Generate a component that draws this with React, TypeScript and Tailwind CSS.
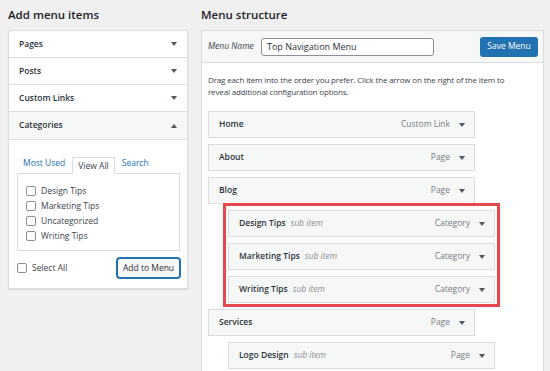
import React from "react";

const font = { fontFamily: '"Open Sans", "Noto Sans", sans-serif' };

function Caret({ up = false }: { up?: boolean }) {
  return (
    <svg width="6" height="4" viewBox="0 0 6 4" className="shrink-0">
      {up ? <path d="M0 4 L3 0 L6 4 Z" fill="#50575e" /> : <path d="M0 0 L6 0 L3 4 Z" fill="#50575e" />}
    </svg>
  );
}

function Checkbox() {
  return <span className="inline-block w-[10px] h-[10px] rounded-[2px] border border-[#8c8f94] bg-white shrink-0" />;
}

const sections = ["Pages", "Posts", "Custom Links"];
const cats = ["Design Tips", "Marketing Tips", "Uncategorized", "Writing Tips"];

type Item = { title: string; type: string; sub?: boolean };

function MenuItem({ title, type, sub }: Item) {
  return (
    <div
      className={`h-[27px] w-[267px] shrink-0 flex items-center border border-[#dcdcde] bg-[#f6f7f7] pl-[10px] pr-[9px] ${
        sub ? "ml-[20px]" : ""
      }`}
    >
      <span className="text-[8.5px] font-semibold text-[#2c3338]">{title}</span>
      {sub && <span className="ml-[5px] text-[8.5px] italic text-[#8c8f94]">sub item</span>}
      <span className="ml-auto mr-[9px] text-[8.5px] text-[#787c82]">{type}</span>
      <Caret />
    </div>
  );
}

export default function App() {
  return (
    <div className="h-[371px] w-[550px] overflow-hidden bg-[#f0f0f1] flex px-[8px] gap-[13px]" style={font}>
      {/* Left column */}
      <div className="w-[180px] shrink-0">
        <h2 className="h-[30px] flex items-center text-[11.5px] font-semibold text-[#1d2327]">Add menu items</h2>
        <div className="bg-white border border-[#dcdcde] shadow-[0_1px_1px_rgba(0,0,0,0.08)]">
          {sections.map((s) => (
            <div key={s} className="h-[27px] flex items-center justify-between pl-[10px] pr-[10px] border-b border-[#dcdcde]">
              <span className="text-[8.5px] font-semibold text-[#2c3338]">{s}</span>
              <Caret />
            </div>
          ))}
          <div className="h-[28px] flex items-center justify-between pl-[10px] pr-[10px] bg-[#f6f7f7] border-b border-[#dcdcde]">
            <span className="text-[8.5px] font-semibold text-[#2c3338]">Categories</span>
            <Caret up />
          </div>
          <div className="pl-[8px] pr-[7px] pt-[16px] pb-[10px]">
            <div className="flex items-end text-[8.5px] h-[17px] pl-[6px]">
              <span className="text-[#2271b1] pr-[7px] pb-[3px]">Most Used</span>
              <span className="h-[17px] px-[5px] border border-b-0 border-[#dcdcde] bg-white text-[#3c434a] flex items-center relative top-[1px]">
                View All
              </span>
              <span className="text-[#2271b1] pl-[7px] pb-[3px]">Search</span>
            </div>
            <div className="h-[78px] border border-[#dcdcde] pl-[8px] pt-[12px] flex flex-col gap-[5px]">
              {cats.map((c) => (
                <div key={c} className="flex items-center gap-[5px] h-[10px]">
                  <Checkbox />
                  <span className="text-[8.5px] text-[#3c434a]">{c}</span>
                </div>
              ))}
            </div>
            <div className="flex items-center justify-between mt-[7px]">
              <div className="flex items-center gap-[5px]">
                <Checkbox />
                <span className="text-[8.5px] text-[#3c434a]">Select All</span>
              </div>
              <button className="h-[20px] w-[63px] rounded-[3px] border border-[#2271b1] bg-[#f6f7f7] text-[8.5px] text-[#2c3338] shadow-[0_0_0_1px_#2271b1]">
                Add to Menu
              </button>
            </div>
          </div>
        </div>
      </div>

      {/* Right column */}
      <div className="w-[343px] shrink-0 flex flex-col">
        <h2 className="h-[30px] flex items-center text-[11.5px] font-semibold text-[#1d2327]">Menu structure</h2>
        <div className="flex-1 bg-white border border-[#dcdcde] border-b-0">
          <div className="h-[32px] bg-[#f6f7f7] border-b border-[#dcdcde] flex items-center pl-[6px] pr-[5px]">
            <span className="text-[8.5px] italic text-[#3c434a] w-[53px]">Menu Name</span>
            <div className="h-[18px] w-[173px] rounded-[3px] border border-[#8c8f94] bg-white flex items-center pl-[5px] text-[9px] text-[#2c3338]">
              Top Navigation Menu
            </div>
            <button className="ml-auto h-[20px] w-[58px] rounded-[3px] bg-[#2271b1] text-white text-[8.5px]">
              Save Menu
            </button>
          </div>
          <div className="pl-[6px] pt-[11px]">
            <p className="text-[8px] leading-[12px] text-[#3c434a] w-[310px] tracking-[-0.15px]">
              Drag each item into the order you prefer. Click the arrow on the right of the item to reveal additional
              configuration options.
            </p>
            <div className="mt-[13px] flex flex-col gap-[6px]">
              <MenuItem title="Home" type="Custom Link" />
              <MenuItem title="About" type="Page" />
              <MenuItem title="Blog" type="Page" />
              <div className="relative flex flex-col gap-[6px]">
                <div className="absolute left-[15px] top-[-7px] w-[277px] h-[104px] border-[3px] border-[#e5484d] pointer-events-none" />
                <MenuItem title="Design Tips" type="Category" sub />
                <MenuItem title="Marketing Tips" type="Category" sub />
                <MenuItem title="Writing Tips" type="Category" sub />
              </div>
              <MenuItem title="Services" type="Page" />
              <MenuItem title="Logo Design" type="Page" sub />
            </div>
          </div>
        </div>
      </div>
    </div>
  );
}
